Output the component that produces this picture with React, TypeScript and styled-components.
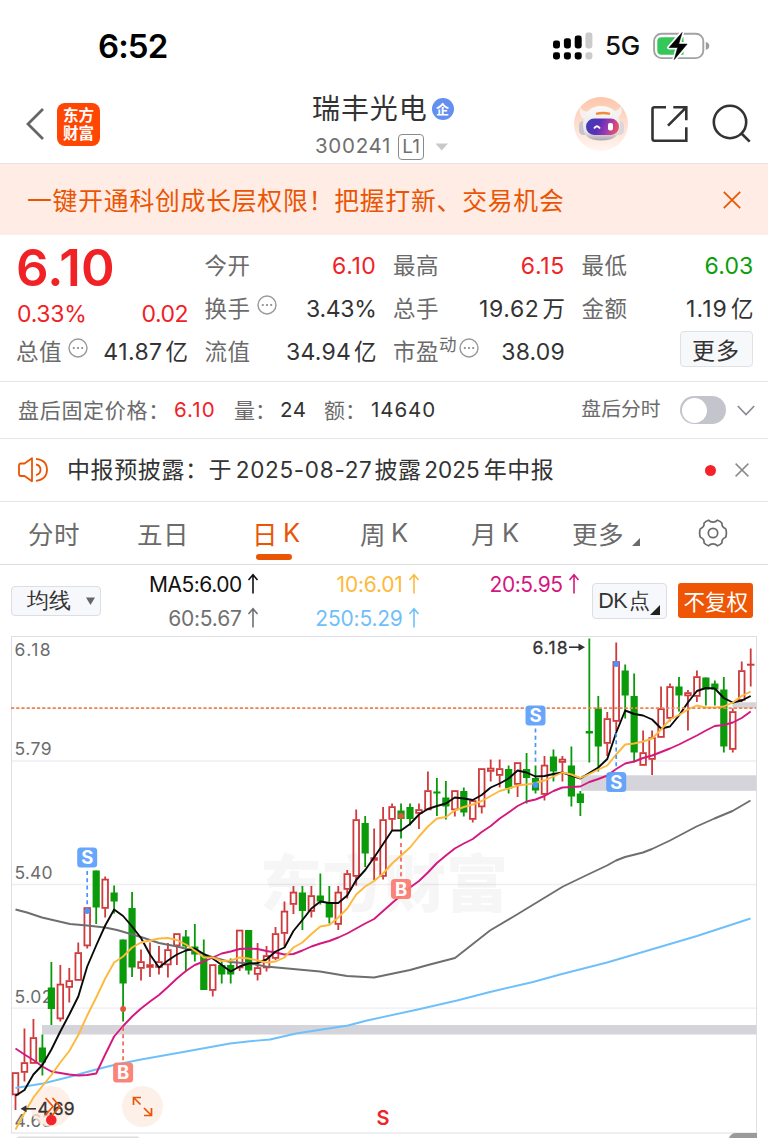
import React from "react";
import styled, { createGlobalStyle, css } from "styled-components";

const C = {
  red: "#f02226",
  green: "#0a9e0a",
  ink: "#333333",
  label: "#6b6b6b",
  orange: "#ea5504",
  line: "#e6e6ea",
};

const Global = createGlobalStyle`
  * { box-sizing: border-box; }
  html, body { margin: 0; padding: 0; background: #fff; }
  body {
    width: 768px; height: 1138px; overflow: hidden;
    font-family: Inter, "Noto Sans CJK SC", sans-serif;
    color: ${C.ink};
    text-autospace: no-autospace;
  }
  svg { display: block; flex: none; }
`;

const Screen = styled.div`
  width: 768px;
  height: 1138px;
  overflow: hidden;
  display: flex;
  flex-direction: column;
  white-space: nowrap;
`;

const T = styled.span<{ $s: number; $ls?: number; $c?: string; $w?: number; $ml?: number; $mt?: number; $width?: number }>`
  font-size: ${(p) => p.$s}px;
  letter-spacing: ${(p) => p.$ls ?? 0}px;
  color: ${(p) => p.$c ?? C.ink};
  font-weight: ${(p) => p.$w ?? 400};
  margin-left: ${(p) => p.$ml ?? 0}px;
  margin-top: ${(p) => p.$mt ?? 0}px;
  line-height: 1;
  flex: none;
  ${(p) => p.$width !== undefined && css`width: ${p.$width}px;`}
`;

/* ---------- status bar ---------- */
const StatusBar = styled.div`
  height: 84px;
  padding: 8px 58px 0 98px;
  display: flex;
  align-items: center;
  justify-content: space-between;
  flex: none;
`;
const StatusIcons = styled.div`
  display: flex;
  align-items: center;
`;

const Signal = () => (
  <svg width="41" height="28" viewBox="552 31.5 41 28">
    <g fill="#000">
      <rect x="553" y="40" width="7" height="8" rx="2.4" />
      <rect x="563.9" y="37.7" width="7" height="10.3" rx="2.4" />
      <rect x="574.7" y="35" width="7" height="13" rx="2.4" />
      <rect x="553" y="51.7" width="7" height="7.3" rx="2.4" />
      <rect x="563.9" y="51.7" width="7" height="7.3" rx="2.4" />
      <rect x="574.7" y="51.7" width="7" height="7.3" rx="2.4" />
    </g>
    <g fill="#cbcbcb">
      <rect x="585.4" y="32" width="7" height="16" rx="2.4" />
      <rect x="585.4" y="51.7" width="7" height="7.3" rx="2.4" />
    </g>
  </svg>
);

const Battery = () => (
  <svg width="58" height="30" viewBox="652.5 30.5 58 30">
    <rect x="654.6" y="33.2" width="49.2" height="24.4" rx="7.5" fill="none" stroke="#a2a2a2" strokeWidth="1.9" />
    <path d="M662 36.7H684V54.3H662Q657.8 54.3 657.8 50V41Q657.8 36.7 662 36.7Z" fill="#35c759" />
    <path d="M706.3 41.6Q709.8 42.6 709.8 45.4Q709.8 48.3 706.3 49.4Z" fill="#9b9b9b" />
    <path d="M682.6 32L669.6 47H678.2L674.8 59L687.6 43.6H679.2Z" fill="#000" stroke="#fff" strokeWidth="4" strokeLinejoin="round" />
    <path d="M682.6 32L669.6 47H678.2L674.8 59L687.6 43.6H679.2Z" fill="#000" stroke="#000" strokeWidth="0.6" strokeLinejoin="round" />
  </svg>
);

/* ---------- navigation ---------- */
const Nav = styled.header`
  height: 80px;
  border-bottom: 1px solid #e2e4e8;
  display: grid;
  grid-template-columns: 1fr 140px 1fr;
  flex: none;
`;
const NavSide = styled.div<{ $end?: boolean }>`
  display: flex;
  align-items: center;
  height: 80px;
  ${(p) => (p.$end ? "justify-content: flex-end; padding-right: 15px;" : "padding-left: 25px;")}
`;
const Logo = styled.div`
  width: 43px;
  height: 43px;
  margin-left: 12px;
  border-radius: 8px;
  background: #ff4603;
  color: #fff;
  font: 700 15.5px/17.5px "Noto Sans CJK SC", sans-serif;
  text-align: center;
  padding-top: 3.5px;
`;
const TitleBlock = styled.div`
  display: flex;
  flex-direction: column;
`;
const TitleRow = styled.div`
  display: flex;
  align-items: center;
  height: 32px;
  margin-top: 9px;
  margin-left: -2px;
`;
const CodeRow = styled.div`
  display: flex;
  align-items: center;
  height: 27px;
  margin-top: 8px;
  padding-left: 1px;
`;
const Verified = styled.span`
  width: 22px;
  height: 22px;
  margin-left: 4px;
  border-radius: 50%;
  background: #648ff0;
  color: #fff;
  font: 700 13px/21px "Noto Sans CJK SC", sans-serif;
  text-align: center;
  flex: none;
`;
const LevelBox = styled.span`
  width: 26px;
  height: 26px;
  margin-left: 7px;
  border: 1.5px solid #8a8a8a;
  border-radius: 4px;
  font-size: 19px;
  line-height: 24px;
  text-align: center;
  color: #707070;
  flex: none;
`;

const Robot = () => (
  <svg width="54" height="54" viewBox="0 0 54 54">
    <defs>
      <linearGradient id="halo" x1="0" y1="0" x2="0" y2="1">
        <stop offset="0" stopColor="#fdc6aa" />
        <stop offset="1" stopColor="#fff6f2" />
      </linearGradient>
      <linearGradient id="visor" x1="0" y1="0" x2="1" y2="0.2">
        <stop offset="0" stopColor="#3a3fb8" />
        <stop offset="0.45" stopColor="#5a2fb5" />
        <stop offset="0.75" stopColor="#a03bb0" />
        <stop offset="1" stopColor="#e2506e" />
      </linearGradient>
      <linearGradient id="shell" x1="0" y1="0" x2="0" y2="1">
        <stop offset="0" stopColor="#fbf9f8" />
        <stop offset="0.75" stopColor="#e9e5e8" />
        <stop offset="1" stopColor="#aaa4ac" />
      </linearGradient>
    </defs>
    <circle cx="27" cy="27" r="27" fill="url(#halo)" />
    <path d="M6 10Q4 18 10 22L17 14Q9 16 6 10ZM47 9Q50 17 43 21L36 14Q45 15 47 9Z" fill="#f6f1f0" />
    <rect x="5" y="24" width="9" height="14" rx="4.5" fill="#c9c4cc" />
    <rect x="41" y="24" width="9" height="14" rx="4.5" fill="#dcd5da" />
    <path d="M27 9C38 9 45 16 46 26C46.500 38 41 43.500 27 43.500C14 43.500 9 38 9 27C10 15 17 9 27 9Z" fill="url(#shell)" />
    <rect x="12" y="21.500" width="33" height="16.500" rx="8.200" fill="url(#visor)" />
    <path d="M22 16.800Q29 15.200 36 16.800" fill="none" stroke="#f08a3c" strokeWidth="2.400" />
    <path d="M20 31.500Q23 27 26 31.500" fill="none" stroke="#fff" strokeWidth="1.800" />
    <rect x="34" y="26" width="5" height="7.500" rx="2" fill="#fff" />
  </svg>
);

/* ---------- banner ---------- */
const Banner = styled.div`
  height: 71px;
  background: #ffece4;
  display: flex;
  align-items: center;
  justify-content: space-between;
  padding: 0 27px 0 27px;
  flex: none;
`;

/* ---------- quote ---------- */
const Quote = styled.section`
  height: 147px;
  border-bottom: 1px solid ${C.line};
  padding: 9.5px 15px 0 17px;
  display: grid;
  grid-template-columns: repeat(4, 171px);
  column-gap: 17.5px;
  flex: none;
`;
const Col = styled.div`
  display: flex;
  flex-direction: column;
`;
const Row = styled.div<{ $h?: number }>`
  height: ${(p) => p.$h ?? 43}px;
  display: flex;
  align-items: center;
  justify-content: space-between;
  flex: none;
`;
const LabelBox = styled.span`
  display: flex;
  align-items: center;
`;
const InfoSlot = styled.span<{ $ml?: number }>`
  margin: -9px 0 0 ${(p) => p.$ml ?? 6}px;
`;
const Sup = styled.span`
  font-size: 17.5px;
  line-height: 1;
  margin: -14px 0 0 0;
  color: ${C.label};
`;
const MoreButton = styled.button`
  width: 73px;
  height: 36px;
  margin: -6px 1px 0 auto;
  padding: 0;
  border: 1px solid #dfe1e8;
  border-radius: 4px;
  background: #f7f8fa;
  font: 400 23px/32px "Noto Sans CJK SC", sans-serif;
  letter-spacing: 1px;
  color: ${C.ink};
`;
const Info = () => (
  <svg width="20" height="20" viewBox="0 0 20 20">
    <circle cx="10" cy="10" r="9" fill="none" stroke="#999" strokeWidth="1.400" />
    <g fill="#888">
      <circle cx="5.800" cy="10" r="1.100" />
      <circle cx="10" cy="10" r="1.100" />
      <circle cx="14.200" cy="10" r="1.100" />
    </g>
  </svg>
);
const Val = ({ n, unit, c, ls = 0.2 }: { n: string; unit?: string; c?: string; ls?: number }) => (
  <LabelBox>
    <T $s={23} $ls={ls} $c={c}>{n}</T>
    {unit && <T $s={22.5} $ml={3}>{unit}</T>}
  </LabelBox>
);
const Label = ({ children }: { children: React.ReactNode }) => (
  <T $s={22.5} $ls={0.5} $ml={-1} $c={C.label}>{children}</T>
);

/* ---------- strips ---------- */
const Strip = styled.div<{ $h: number; $line?: number }>`
  height: ${(p) => p.$h}px;
  border-bottom: ${(p) => p.$line ?? 1}px solid ${C.line};
  display: flex;
  align-items: center;
  padding: 0 13px 0 18px;
  flex: none;
`;
const Spacer = styled.div`
  flex: 1;
`;
const Toggle = styled.span`
  width: 46px;
  height: 28px;
  border-radius: 14px;
  background: #c4c4cc;
  padding: 1.5px;
  margin-left: 19.5px;
  flex: none;
  &::after {
    content: "";
    display: block;
    width: 25px;
    height: 25px;
    border-radius: 50%;
    background: #fff;
  }
`;
const Dot = styled.span`
  width: 11px;
  height: 11px;
  border-radius: 50%;
  background: #f5222a;
  margin-right: 19px;
`;

/* ---------- tabs ---------- */
const Tabs = styled.nav`
  height: 63px;
  border-bottom: 1px solid #dcdce6;
  display: flex;
  align-items: center;
  padding-left: 28px;
  flex: none;
`;
const Tab = styled.div<{ $w: number; $active?: boolean }>`
  width: ${(p) => p.$w}px;
  height: 62px;
  padding-bottom: 2px;
  display: flex;
  align-items: center;
  gap: 5px;
  color: ${(p) => (p.$active ? C.orange : "#6b6b6b")};
  font-size: 25.5px;
  letter-spacing: 0.6px;
  position: relative;
  ${(p) =>
    p.$active &&
    css`
      &::after {
        content: "";
        position: absolute;
        left: 4px;
        bottom: 4px;
        width: 36px;
        height: 6px;
        border-radius: 3px;
        background: ${C.orange};
      }
    `}
`;
const Corner = styled.span<{ $s: number; $c: string }>`
  width: 0;
  height: 0;
  border-left: ${(p) => p.$s}px solid transparent;
  border-bottom: ${(p) => p.$s}px solid ${(p) => p.$c};
  align-self: flex-end;
`;

/* ---------- moving average legend ---------- */
const Legend = styled.div`
  height: 71px;
  display: flex;
  align-items: center;
  padding: 0 15px 0 11px;
  flex: none;
`;
const SelectButton = styled.button`
  width: 90px;
  height: 30px;
  padding: 0 5px 0 15px;
  display: flex;
  align-items: center;
  justify-content: space-between;
  border: 1px solid #dcdde6;
  border-radius: 4px;
  background: #f7f8fb;
`;
const MaGrid = styled.div`
  display: grid;
  grid-template-columns: 158px 161px 160px;
  grid-auto-rows: 34px;
  margin: 1px 12px 0 0;
  height: 68px;
`;
const MaCell = styled.div<{ $c: string; $ls?: number }>`
  display: flex;
  align-items: center;
  justify-content: flex-end;
  gap: 5px;
  font-size: 21px;
  line-height: 1;
  letter-spacing: ${(p) => p.$ls ?? -0.2}px;
  color: ${(p) => p.$c};
`;
const DkButton = styled.button`
  width: 76px;
  height: 36px;
  padding: 3px 4px;
  display: flex;
  align-items: center;
  border: 1px solid #dcdde6;
  border-radius: 4px;
  background: #f7f8fb;
`;
const AdjustButton = styled.button`
  width: 75px;
  height: 35px;
  margin-left: 11px;
  padding: 0;
  border: 0;
  border-radius: 3px;
  background: #ee5504;
  color: #fff;
  font: 400 21.5px/33px "Noto Sans CJK SC", sans-serif;
`;
const Up = () => (
  <svg width="12" height="22" viewBox="0 0 12 22">
    <path d="M6 20.500V2M1.500 7L6 1.800L10.500 7" fill="none" stroke="currentColor" strokeWidth="1.600" />
  </svg>
);

const ChartArea = styled.div`
  height: 502px;
  flex: none;
`;

/* candle: rising flag, high, body top, body bottom, low */
type Candle = [0 | 1, number, number, number, number];
const candles: Candle[] = [
  [1, 1072.5, 1072.5, 1095, 1110], [1, 1028.5, 1062.5, 1072.5, 1081.5], [1, 1019, 1037.5, 1063.5, 1063.5],
  [0, 1034.5, 1047.5, 1062.5, 1075.5], [0, 962, 987.5, 1009, 1025], [1, 965, 984, 1019, 1021.5],
  [1, 968, 980.5, 987.5, 1002.5], [1, 942.5, 952.5, 980.5, 980.5], [1, 907.5, 907.5, 946, 948.5],
  [0, 870.5, 870.5, 907.5, 924], [1, 876.5, 879, 908.5, 917.5], [0, 885.5, 892.5, 901.5, 913.5],
  [0, 939.5, 939.5, 983.5, 1021.5], [0, 892, 908, 967.5, 977], [1, 949.5, 961.5, 968.5, 980.5],
  [1, 942.5, 964.5, 967.5, 977], [1, 946, 961.5, 967.5, 974.5], [1, 943, 949.5, 965, 977.5],
  [1, 933.5, 933.5, 946, 965], [0, 930, 936.5, 946.5, 971.5], [0, 924, 946.5, 954.5, 961.5],
  [0, 939.5, 955.5, 990, 990], [1, 964.5, 964.5, 990.5, 996.5], [0, 961.5, 965, 974.5, 983.5],
  [0, 958.5, 965, 974.5, 983.5], [1, 930, 930, 968, 971], [0, 930, 930, 970.5, 974.5],
  [1, 943, 967.5, 974.5, 980.5], [1, 946, 955.5, 968, 971.5], [1, 927, 933.5, 958.5, 960],
  [1, 901.5, 911, 933.5, 946.5], [1, 886, 892, 904.5, 914], [0, 886, 892.5, 911, 930],
  [1, 886, 895.5, 911.5, 917.5], [0, 873.5, 895.5, 901.5, 904.5], [0, 886, 902.5, 917.5, 923.5],
  [1, 886, 892, 924.5, 930], [1, 870, 873.5, 889.5, 898.5], [1, 809.5, 819.5, 876.5, 885.5],
  [0, 816, 823, 853.5, 867], [1, 828.5, 857.5, 860.5, 880], [1, 807, 819.5, 876.5, 879.5],
  [1, 803.5, 806.5, 819.5, 830.5], [0, 803.5, 810.5, 819, 838.5], [0, 803.5, 807, 819, 825.5],
  [1, 803.5, 809.5, 813.5, 829], [1, 771.5, 790.5, 810, 810], [0, 778, 791.5, 793.5, 816],
  [0, 781, 797.5, 806.5, 819.5], [1, 790.5, 790.5, 810, 816.5], [0, 787.5, 791, 812.5, 816.5],
  [1, 800.5, 800.5, 819.5, 822.5], [1, 768.5, 768.5, 807, 813.5], [1, 759.5, 768, 771.5, 781.5],
  [1, 759.5, 768.5, 775.5, 787.5], [0, 765.5, 769, 788.5, 793.5], [1, 762.5, 762.5, 784.5, 797],
  [0, 753, 769, 778, 803.5], [0, 765.5, 778, 790.5, 793.5], [1, 756, 765, 794.5, 800.5],
  [0, 749.5, 756.5, 771.5, 781.5], [1, 756, 759, 762.5, 781.5], [0, 746.5, 765.5, 796.5, 806.5],
  [0, 791, 793.5, 803, 816], [0, 638.5, 731, 733.5, 762.5], [0, 696, 708.5, 746.5, 771.5],
  [1, 712, 718.5, 743.5, 756], [1, 642.5, 661.5, 721.5, 731], [0, 664.5, 670.5, 695.5, 718.5],
  [0, 673.5, 696, 752.5, 762.5], [1, 730.5, 752.5, 765.5, 765.5], [1, 730.5, 737.5, 759.5, 775],
  [1, 686.5, 708.5, 737.5, 737.5], [1, 683.5, 686.5, 718.5, 721.5], [0, 677, 686.5, 695.5, 711.5],
  [1, 690, 692.5, 696, 730.5], [1, 670.5, 676.5, 696.5, 702], [0, 677.5, 677.5, 689.5, 705.5],
  [0, 680.5, 683.5, 689.5, 705.5], [0, 677, 689.5, 746.5, 752.5], [1, 708.5, 711.5, 749.5, 752.5],
  [1, 661.5, 670.5, 700.5, 702], [1, 648.5, 664, 665, 686.5],
];
const cx = (i: number) => 15.5 + i * 8.966;

const ma5 = [1095.7, 1090, 1074.5, 1065, 1049.5, 1031.5, 1014.5, 996.5, 966.5, 945.5, 925.5, 909.5, 916, 926.5, 938, 954.5, 967.5, 960.5, 954.5, 950.5, 948.5, 954, 958.5, 965, 971.5, 966.5, 963.5, 963, 959.5, 951.5, 947.5, 931, 920, 908.5, 901.5, 903, 903, 895.5, 880, 870, 857.5, 844, 830.5, 830.5, 824, 814.5, 809, 806, 803.5, 797.5, 798.5, 800, 795, 787.5, 783.5, 778.5, 770.5, 772.5, 776.5, 776, 774, 772.5, 775.5, 778.5, 773, 767.5, 759, 732.5, 710.5, 714, 715.5, 719.5, 728.5, 726.5, 715.5, 702.5, 691, 688, 688.5, 698, 702.5, 700.5, 696];
const ma10 = [1129.5, 1113, 1097.5, 1086, 1075, 1062.5, 1051, 1035, 1015.5, 997.5, 978.5, 962.5, 956.5, 947.5, 942.5, 940.5, 938.5, 938, 940, 944.5, 950.5, 957.5, 957.5, 961, 960.5, 957.5, 958.5, 960.5, 962.5, 961.5, 957.5, 947.5, 942.5, 934, 926.5, 925, 917.5, 908.5, 894.5, 886.5, 881, 873.5, 863.5, 855.5, 847.5, 836.5, 826.5, 818.5, 817, 810.5, 807, 804.5, 801, 796, 791, 788.5, 785.5, 784.5, 783, 780.5, 776.5, 772.5, 774.5, 778, 774, 769.5, 765.5, 754.5, 744.5, 743.5, 741.5, 738.5, 729.5, 719.5, 715, 709.5, 705.5, 707.5, 707.5, 706.5, 702.5, 696, 691.5];
const ma20 = [1048.5, 1054.5, 1060, 1066.5, 1071.5, 1073, 1074.5, 1075.5, 1075, 1073.5, 1054.5, 1036.5, 1026, 1016.5, 1008.5, 1001.5, 995, 987, 978.5, 971, 965, 961.5, 957.5, 953.5, 951.5, 949, 948.5, 949, 951, 952.5, 954.5, 954, 950.5, 946.5, 943.5, 941, 937.5, 933.5, 928.5, 923.5, 919, 911, 903, 895.5, 887.5, 881, 872.5, 863, 855.5, 848.5, 843.5, 839, 832, 826, 818.5, 812.5, 806, 801.5, 799.5, 796, 791, 787.5, 787, 786.5, 782, 779, 775.5, 769, 763.5, 761.5, 758, 755.5, 752, 748.5, 744.5, 740, 735.5, 730.5, 726, 725, 722.5, 718, 711.5];
const ma60 = "15.5,909.5 27,912.5 42,917.5 70,924 87,925.5 105,927.5 117,930 141,937 159,943 177,946.5 195,951 212,957 230,962 250,963.5 266,966.5 293,969 320,971.5 347,976 374,977.5 410,970 428,965 455,958 490,930.5 517,914.5 563,886.5 589,874 607,865.5 616,860.5 625,857 643,852.5 652,849 670,840.5 696.5,826.5 714.5,818.5 732.5,811 750.5,800.5";
const ma250 = "15.5,1088 43,1083.5 69,1077 96,1069.5 114,1065 141,1059.5 186,1051.5 230,1043.5 250,1041.2 270,1039.5 296,1033.5 348,1025.5 367,1020.5 420,1009 457,1000.5 490,992 533,982 560,974.5 607,962.5 653,949 697,936 750.5,918.5";
const series = (ys: number[]) => ys.map((y, i) => `${cx(i).toFixed(1)},${y}`).join(" ");

const Marker = ({ x, y, kind, from, to, dot }: { x: number; y: number; kind: "S" | "B"; from: number; to: number; dot: number }) => {
  const color = kind === "S" ? "#4a94fa" : "#f4655a";
  return (
    <g>
      <line x1={x} x2={x} y1={from} y2={to} stroke={color} strokeWidth="1.700" strokeDasharray="4 3.300" />
      <circle cx={x} cy={dot} r="2.900" fill={kind === "S" ? "#4a94fa" : "#e0563c"} />
      <rect x={x - 10} y={y - 10} width="20" height="20" rx="3.500" fill={kind === "S" ? "#5da0fb" : "#fb7c70"} opacity="0.940" />
      <text x={x} y={y + 6.5} fontSize="18.500" fontWeight="700" fill="#fff" textAnchor="middle">{kind}</text>
    </g>
  );
};

const Chart = () => (
  <svg width="768" height="502" viewBox="0 636 768 502" fontFamily='Inter, "Noto Sans CJK SC", sans-serif'>
    <g stroke="#eeeef3" strokeWidth="1.300">
      <line x1="12" x2="756" y1="761" y2="761" />
      <line x1="12" x2="756" y1="884.500" y2="884.500" />
      <line x1="12" x2="756" y1="1008.200" y2="1008.200" />
    </g>
    <text x="260" y="907" fontSize="62" fontWeight="900" fill="#000" opacity="0.032" textLength="248">东方财富</text>
    <rect x="11.500" y="636.500" width="745" height="496.500" fill="none" stroke="#dedee6" />
    <g fill="#d4d4da">
      <rect x="42" y="1025" width="714.500" height="9.500" />
      <rect x="581" y="775.300" width="175.500" height="15.500" />
      <rect x="732.500" y="702.300" width="24" height="6" />
    </g>
    <g fontSize="17.500" fill="#6c6c6c">
      <text x="14.500" y="655.800" textLength="36">6.18</text>
      <text x="14.500" y="755" textLength="37">5.79</text>
      <text x="14.500" y="879" textLength="38">5.40</text>
      <text x="14.500" y="1003" textLength="38">5.02</text>
      <text x="14.500" y="1126.800" textLength="38">4.63</text>
    </g>
    <circle cx="51" cy="1106.500" r="20.500" fill="#fdebe0" opacity="0.750" />
    <circle cx="142.500" cy="1106.500" r="20.500" fill="#fdf0e8" />
    {candles.map(([up, h, t, b, l], i) => {
      const x = cx(i);
      return up ? (
        <g key={i} stroke="#cf3a3c" strokeWidth="1.800" fill="none">
          <path d={`M${x} ${h}V${t}M${x} ${b}V${l}`} />
          <rect x={x - 2.8} y={t + 0.6} width="5.600" height={Math.max(b - t - 1.2, 0.2)} />
        </g>
      ) : (
        <g key={i} fill="#0a9a0a">
          <rect x={x - 0.9} y={h} width="1.800" height={l - h} />
          <rect x={x - 3.6} y={t} width="7.200" height={b - t} />
        </g>
      );
    })}
    <g fill="none" strokeWidth="1.900" strokeLinejoin="round">
      <polyline points={ma60} stroke="#6e6e6e" />
      <polyline points={ma250} stroke="#6fc0fa" />
      <polyline points={series(ma20)} stroke="#d4187f" />
      <polyline points={series(ma5)} stroke="#0a0a0a" />
      <polyline points={series(ma10)} stroke="#fdb93b" />
    </g>
    <line x1="11" x2="756" y1="708.200" y2="708.200" stroke="#ec8350" strokeWidth="1.800" strokeDasharray="3.200 2" />
    <Marker x={87.2} y={857.5} kind="S" from={871} to={907} dot={911} />
    <Marker x={123.1} y={1072.5} kind="B" from={1027} to={1061} dot={1009} />
    <Marker x={401} y={889} kind="B" from={843} to={878} dot={816} />
    <Marker x={535.5} y={715.5} kind="S" from={728.5} to={763} dot={785} />
    <Marker x={616.2} y={782} kind="S" from={733} to={770} dot={664} />
    <text x="532.500" y="653.500" fontSize="17.500" fill="#333" strokeWidth="0.300" stroke="#333" textLength="35">6.18</text>
    <path d="M569 647.200H580" stroke="#333" strokeWidth="1.600" />
    <path d="M585 647.200L578.500 643.500V651Z" fill="#333" />
    <path d="M26 1108.800H36" stroke="#333" strokeWidth="1.600" />
    <path d="M20.500 1108.800L26.500 1105.300V1112.300Z" fill="#333" />
    <text x="37.500" y="1115.200" fontSize="17.500" fill="#333" strokeWidth="0.300" stroke="#333" textLength="37">4.69</text>
    <g fill="none" stroke={C.orange} strokeWidth="1.700">
      <path d="M45.500 1098L53 1106.500L45.500 1115M52.500 1098L60 1106.500L52.500 1115" />
      <path d="M133.500 1105V1097.500H141M134 1098L140.500 1104.500M144 1115.500H151.500V1108M151 1115L144 1108" />
    </g>
    <circle cx="51.300" cy="1120" r="5.300" fill="#f5222a" />
    <text x="383" y="1124.500" fontSize="20" fontWeight="600" fill="#ee2429" textAnchor="middle">S</text>
    <rect x="17" y="1136.500" width="122" height="3" rx="1.500" fill="#dcdce2" />
    <path d="M729 1138Q731 1133 736 1133H757V1138Z" fill="#9a9a9a" />
  </svg>
);

export default function App() {
  return (
    <>
      <Global />
      <Screen>
        <StatusBar>
          <T $s={33} $w={600} $c="#000" $ls={-0.9}>6:52</T>
          <StatusIcons>
            <Signal />
            <T $s={26} $w={500} $c="#111" $ls={-0.2} $ml={12} $width={47}>5G</T>
            <Battery />
          </StatusIcons>
        </StatusBar>

        <Nav>
          <NavSide>
            <svg width="20" height="34" viewBox="0 0 20 34">
              <path d="M18 2L3 17L18 32" fill="none" stroke="#666" strokeWidth="2.800" />
            </svg>
            <Logo>东方<br />财富</Logo>
          </NavSide>
          <TitleBlock>
            <TitleRow>
              <T $s={28} $ls={0.9}>瑞丰光电</T>
              <Verified>企</Verified>
            </TitleRow>
            <CodeRow>
              <T $s={20.5} $ls={0.7} $c="#707070">300241</T>
              <LevelBox>L1</LevelBox>
              <svg width="14" height="8" viewBox="0 0 14 8" style={{ marginLeft: 11 }}>
                <path d="M0.500 0.500H13L6.700 7.500Z" fill="#c9c9c9" />
              </svg>
            </CodeRow>
          </TitleBlock>
          <NavSide $end>
            <Robot />
            <svg width="125" height="40" viewBox="628 104 125 40" fill="none" stroke="#333" strokeWidth="2.600">
              <path d="M666 107.300H654.500Q652.500 107.300 652.500 109.300V138.500Q652.500 140.700 654.500 140.700H686.300V127.300M673.300 107.300H686.300V120.300M668 125.700L686 107.700" />
              <circle cx="730" cy="122" r="16.200" />
              <path d="M741.500 133.500L749.700 141.700" />
            </svg>
          </NavSide>
        </Nav>

        <Banner>
          <T $s={24.8} $ls={0.8} $mt={3} $c={C.orange}>一键开通科创成长层权限！把握打新、交易机会</T>
          <svg width="18" height="18" viewBox="0 0 18 18">
            <path d="M0.800 0.800L17.200 17.200M17.200 0.800L0.800 17.200" stroke={C.orange} strokeWidth="1.700" />
          </svg>
        </Banner>

        <Quote>
          <Col>
            <Row $h={46}><T $s={51} $w={600} $c={C.red} $ls={0.2} $ml={-1}>6.10</T></Row>
            <Row $h={48}><Val n="0.33%" c={C.red} ls={-0.3} /><Val n="0.02" c={C.red} ls={-0.5} /></Row>
            <Row $h={27}>
              <LabelBox><Label>总值</Label><InfoSlot><Info /></InfoSlot></LabelBox>
              <Val n="41.87" unit="亿" ls={0.4} />
            </Row>
          </Col>
          <Col>
            <Row><Label>今开</Label><Val n="6.10" c={C.red} ls={0.6} /></Row>
            <Row>
              <LabelBox><Label>换手</Label><InfoSlot><Info /></InfoSlot></LabelBox>
              <Val n="3.43%" ls={-0.3} />
            </Row>
            <Row><Label>流值</Label><Val n="34.94" unit="亿" /></Row>
          </Col>
          <Col>
            <Row><Label>最高</Label><Val n="6.15" c={C.red} ls={0.7} /></Row>
            <Row><Label>总手</Label><Val n="19.62" unit="万" ls={0.6} /></Row>
            <Row>
              <LabelBox><Label>市盈</Label><Sup>动</Sup><InfoSlot $ml={2}><Info /></InfoSlot></LabelBox>
              <Val n="38.09" />
            </Row>
          </Col>
          <Col>
            <Row><Label>最低</Label><Val n="6.03" c={C.green} /></Row>
            <Row><Label>金额</Label><Val n="1.19" unit="亿" ls={1.1} /></Row>
            <Row><MoreButton>更多</MoreButton></Row>
          </Col>
        </Quote>

        <Strip $h={57}>
          <T $s={21} $ls={0.7} $c={C.label} $width={156}>盘后固定价格：</T>
          <T $s={20.5} $ls={1.1} $c={C.red} $width={60}>6.10</T>
          <T $s={21} $c={C.label} $width={46}>量：</T>
          <T $s={20.5} $ls={0.5} $width={44}>24</T>
          <T $s={21} $c={C.label} $width={47}>额：</T>
          <T $s={20.5} $ls={0.9}>14640</T>
          <Spacer />
          <T $s={19.8} $c={C.label}>盘后分时</T>
          <Toggle />
          <svg width="18" height="11" viewBox="0 0 18 11" style={{ marginLeft: 11 }}>
            <path d="M0.800 1L9 9.500L17.200 1" fill="none" stroke="#8a8a94" strokeWidth="1.700" />
          </svg>
        </Strip>

        <Strip $h={63} $line={1.5}>
          <svg width="31" height="26" viewBox="0 0 31 26" fill="none" stroke={C.orange} strokeWidth="1.800">
            <path d="M14 1.200L6.500 6.500H3Q1 6.500 1 8.500V17Q1 19 3 19H6.500L14 24.300Z" strokeLinejoin="round" />
            <path d="M18 7.500Q22.500 8.500 22.500 12.800Q22.500 17 18 18.200M18 1.800Q29 3 29 12.800Q29 22.500 18 23.800" />
          </svg>
          <T $s={23} $ls={0.6} $ml={18}>中报预披露：于</T>
          <T $s={22.5} $ls={0.7} $ml={3.5}>2025-08-27</T>
          <T $s={23} $ls={0.4} $ml={2}>披露</T>
          <T $s={22.5} $ls={0} $ml={3}>2025</T>
          <T $s={23} $ls={0.5} $ml={4}>年中报</T>
          <Spacer />
          <Dot />
          <svg width="14" height="14" viewBox="0 0 14 14" style={{ marginRight: 6 }}>
            <path d="M0.600 0.600L13.400 13.400M13.400 0.600L0.600 13.400" stroke="#8c8c8c" strokeWidth="1.500" />
          </svg>
        </Strip>

        <Tabs>
          <Tab $w={109}>分时</Tab>
          <Tab $w={115}>五日</Tab>
          <Tab $w={108} $active><span>日</span><span>K</span></Tab>
          <Tab $w={111}><span>周</span><span>K</span></Tab>
          <Tab $w={101}><span>月</span><span>K</span></Tab>
          <Tab $w={126}>
            更多
            <svg width="8" height="8" viewBox="0 0 8 8" style={{ marginTop: 19, marginLeft: 3 }}>
              <path d="M8 0V8H0Z" fill="#6b6b6b" />
            </svg>
          </Tab>
          <svg width="30" height="30" viewBox="0 0 30 30" fill="none" stroke="#6b6b6b" strokeWidth="1.700">
            <circle cx="15" cy="15" r="4.700" />
            <path d="M10.500 2.200Q12.300 4.100 15 4.100Q17.700 4.100 19.500 2.200Q22.300 3 24 5.200Q23.300 9 27.600 10.800Q28.400 12 28.400 15Q28.400 18 27.600 19.200Q23.300 21 24 24.800Q22.300 27 19.500 27.800Q17.700 25.900 15 25.900Q12.300 25.900 10.500 27.800Q7.700 27 6 24.800Q6.700 21 2.400 19.200Q1.600 18 1.600 15Q1.600 12 2.400 10.800Q6.700 9 6 5.200Q7.700 3 10.500 2.200Z" strokeLinejoin="round" />
          </svg>
        </Tabs>

        <Legend>
          <SelectButton>
            <T $s={21.5} $mt={3}>均线</T>
            <svg width="9" height="8" viewBox="0 0 9 8"><path d="M0 0.500H9L4.500 8Z" fill="#666" /></svg>
          </SelectButton>
          <MaGrid>
            <MaCell $c="#111" $ls={-0.5}>MA5:6.00<Up /></MaCell>
            <MaCell $c="#fdb93b">10:6.01<Up /></MaCell>
            <MaCell $c="#d4187f" $ls={-0.4}>20:5.95<Up /></MaCell>
            <MaCell $c="#707070">60:5.67<Up /></MaCell>
            <MaCell $c="#6fc0fa">250:5.29<Up /></MaCell>
          </MaGrid>
          <DkButton>
            <T $s={21.5} $ls={-0.6} $mt={2} $width={32}>DK</T>
            <T $s={21}>点</T>
            <Corner $s={10} $c="#222" />
          </DkButton>
          <AdjustButton>不复权</AdjustButton>
        </Legend>

        <ChartArea><Chart /></ChartArea>
      </Screen>
    </>
  );
}
